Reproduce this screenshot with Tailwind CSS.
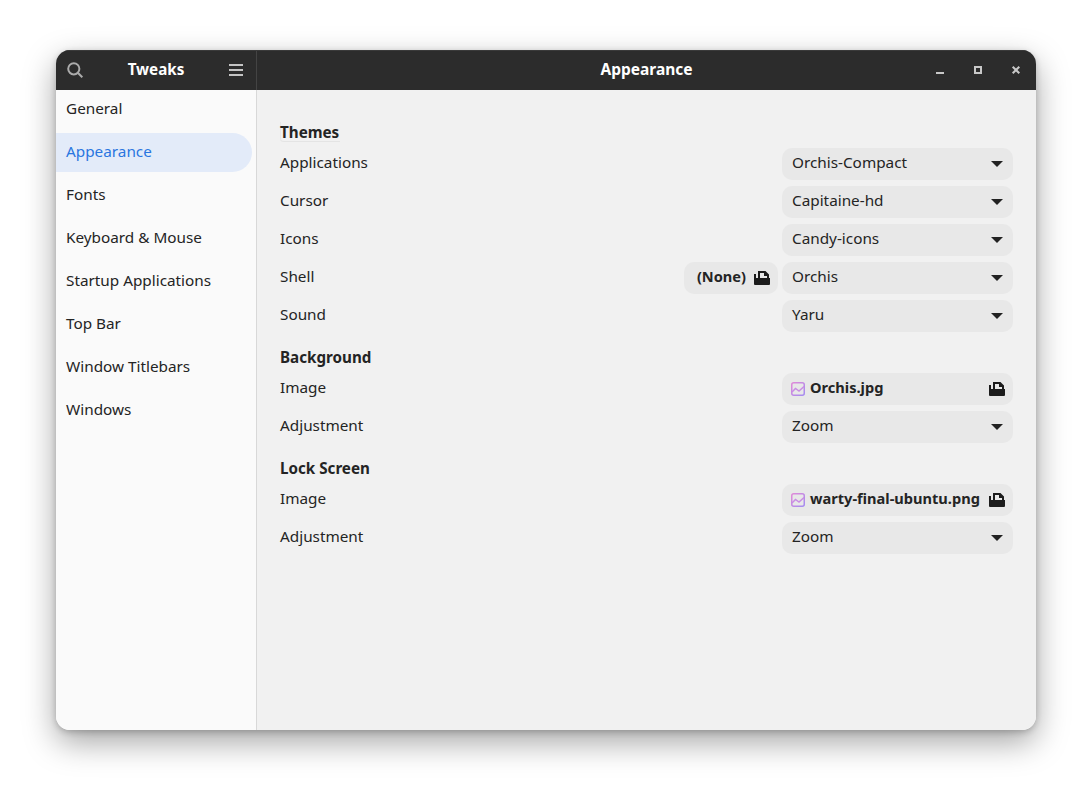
<!DOCTYPE html>
<html lang="en">
<head>
  <meta charset="UTF-8" />
  <title>Tweaks</title>
  <script src="https://cdn.jsdelivr.net/npm/@tailwindcss/browser@4"></script>
</head>
<body class="bg-white w-[1092px] h-[792px] overflow-hidden pt-[50px] pl-[56px] font-['Noto_Sans','Open_Sans',sans-serif] text-[15.3px] text-[#242424]">

  <div class="w-[980px] h-[680px] rounded-[14px] overflow-hidden flex flex-col shadow-[0_12px_32px_rgba(0,0,0,0.36),0_2px_6px_rgba(0,0,0,0.2)]">

    <!-- title bar -->
    <header class="h-[40px] bg-[#2c2c2c] flex text-white font-bold shrink-0 border-t border-[#3a3a3a]">
      <div class="w-[200px] flex items-center justify-between pl-[11px] pr-[13px] pb-[1px]">
        <svg class="w-[16px] h-[16px]" viewBox="0 0 16 16" fill="none" stroke="#ababab" stroke-width="2"><circle cx="6.800" cy="6.800" r="5.600"/><path d="M10.800 10.800L15.300 15.300"/></svg>
        <span class="text-[15.2px] leading-none">Tweaks</span>
        <svg class="w-[14px] h-[14px]" viewBox="0 0 14 14" fill="#c4c4c4"><rect y="1" width="14" height="2"/><rect y="6" width="14" height="2"/><rect y="11" width="14" height="2"/></svg>
      </div>
      <div class="w-px bg-[#444444]"></div>
      <div class="flex-1 flex items-center relative pb-[1px]">
        <span class="w-full text-center text-[15.5px] leading-none">Appearance</span>
        <div class="absolute right-[13px] top-0 h-[39px] pb-[1px] flex items-center gap-[24px]">
          <svg class="w-[14px] h-[14px]" viewBox="0 0 14 14" fill="#c8c8c8"><rect x="3" y="9" width="8" height="2"/></svg>
          <svg class="w-[14px] h-[14px]" viewBox="0 0 14 14" fill="none" stroke="#c8c8c8" stroke-width="2"><rect x="4" y="4" width="6" height="6"/></svg>
          <svg class="w-[14px] h-[14px]" viewBox="0 0 14 14" fill="none" stroke="#c8c8c8" stroke-width="2"><path d="M3.700 3.700L10.300 10.300M10.300 3.700L3.700 10.300"/></svg>
        </div>
      </div>
    </header>

    <div class="flex-1 flex min-h-0">
      <!-- sidebar -->
      <nav class="w-[201px] bg-[#fafafa] border-r border-[#d8d8d8] shrink-0 pr-[4px]">
        <div class="h-[38px] flex items-center pl-[10px] pb-[2px]">General</div>
        <div class="h-[39px] mt-[5px] flex items-center pl-[10px] pb-[2px] bg-[#e3ebf9] text-[#2a76e0] rounded-r-[20px]">Appearance</div>
        <div class="h-[38px] mt-[4px] flex items-center pl-[10px] pb-[2px]">Fonts</div>
        <div class="h-[38px] mt-[5px] flex items-center pl-[10px] pb-[2px]">Keyboard &amp; Mouse</div>
        <div class="h-[38px] mt-[5px] flex items-center pl-[10px] pb-[2px]">Startup Applications</div>
        <div class="h-[38px] mt-[5px] flex items-center pl-[10px] pb-[2px]">Top Bar</div>
        <div class="h-[38px] mt-[5px] flex items-center pl-[10px] pb-[2px]">Window Titlebars</div>
        <div class="h-[38px] mt-[5px] flex items-center pl-[10px] pb-[2px]">Windows</div>
      </nav>

      <!-- content -->
      <main class="flex-1 bg-[#f1f1f1] pt-[32px] pl-[23px] pr-[23px]">
        <h2 class="h-[20px] leading-[20px] font-bold text-[15.2px] mb-[6px]"><span class="inline-block h-[20px] w-[60px] rounded-bl-[4px] shadow-[inset_1px_0_0_#e8e8e8,inset_0_-1px_0_#e4e4e4]">Themes</span></h2>

        <div class="flex flex-col gap-[6px]">
          <div class="flex items-center justify-between h-[32px]">
            <span class="mb-[3px]">Applications</span>
            <div class="w-[231px] h-[32px] rounded-[10px] bg-[#e8e8e8] flex items-center justify-between pl-[10px] pr-[10px]"><span class="mb-[3px]">Orchis-Compact</span><svg class="w-[12px] h-[6px]" viewBox="0 0 12 6" fill="#222222"><path d="M0 0H12L6 6Z"/></svg></div>
          </div>
          <div class="flex items-center justify-between h-[32px]">
            <span class="mb-[3px]">Cursor</span>
            <div class="w-[231px] h-[32px] rounded-[10px] bg-[#e8e8e8] flex items-center justify-between pl-[10px] pr-[10px]"><span class="mb-[3px]">Capitaine-hd</span><svg class="w-[12px] h-[6px]" viewBox="0 0 12 6" fill="#222222"><path d="M0 0H12L6 6Z"/></svg></div>
          </div>
          <div class="flex items-center justify-between h-[32px]">
            <span class="mb-[3px]">Icons</span>
            <div class="w-[231px] h-[32px] rounded-[10px] bg-[#e8e8e8] flex items-center justify-between pl-[10px] pr-[10px]"><span class="mb-[3px]">Candy-icons</span><svg class="w-[12px] h-[6px]" viewBox="0 0 12 6" fill="#222222"><path d="M0 0H12L6 6Z"/></svg></div>
          </div>
          <div class="flex items-center h-[32px]">
            <span class="flex-1 mb-[3px]">Shell</span>
            <div class="w-[94px] h-[32px] rounded-[10px] bg-[#e8e8e8] flex items-center justify-end gap-[8px] pr-[8px] font-bold text-[14.6px] mr-[4px]"><span class="mb-[2px]">(None)</span>
              <svg class="w-[16px] h-[14px] shrink-0" viewBox="0 0 16 14" fill="#1c1c1c" fill-rule="evenodd"><path d="M4 0H11.500L15 3.500V7H4ZM6 2V7H13V5H10V2ZM0 3H2V7H16V13A1 1 0 0 1 15 14H1A1 1 0 0 1 0 13Z"/></svg></div>
            <div class="w-[231px] h-[32px] rounded-[10px] bg-[#e8e8e8] flex items-center justify-between pl-[10px] pr-[10px]"><span class="mb-[3px]">Orchis</span><svg class="w-[12px] h-[6px]" viewBox="0 0 12 6" fill="#222222"><path d="M0 0H12L6 6Z"/></svg></div>
          </div>
          <div class="flex items-center justify-between h-[32px]">
            <span class="mb-[3px]">Sound</span>
            <div class="w-[231px] h-[32px] rounded-[10px] bg-[#e8e8e8] flex items-center justify-between pl-[10px] pr-[10px]"><span class="mb-[3px]">Yaru</span><svg class="w-[12px] h-[6px]" viewBox="0 0 12 6" fill="#222222"><path d="M0 0H12L6 6Z"/></svg></div>
          </div>
        </div>

        <h2 class="h-[20px] leading-[20px] font-bold text-[15.2px] mt-[15px] mb-[6px]">Background</h2>

        <div class="flex flex-col gap-[6px]">
          <div class="flex items-center justify-between h-[32px]">
            <span class="mb-[3px]">Image</span>
            <div class="w-[231px] h-[32px] rounded-[10px] bg-[#e8e8e8] flex items-center pl-[9px] pr-[8px] font-bold text-[14.6px]">
              <svg class="w-[14px] h-[14px] shrink-0 mr-[5px]" viewBox="0 0 14 14" fill="none" stroke-width="1.500"><defs><linearGradient id="pic-a" x1="0" y1="0" x2="1" y2="1"><stop offset="0" stop-color="#e08ad8"/><stop offset="1" stop-color="#a48cf0"/></linearGradient></defs><rect x="0.750" y="0.750" width="12.500" height="12.500" rx="2" stroke="url(#pic-a)"/><path d="M1 10L4.500 6.500L8 9L13 4.500" stroke="#c98ce4"/></svg>
              <span class="flex-1 mb-[2px]">Orchis.jpg</span>
              <svg class="w-[16px] h-[14px] shrink-0" viewBox="0 0 16 14" fill="#1c1c1c" fill-rule="evenodd"><path d="M4 0H11.500L15 3.500V7H4ZM6 2V7H13V5H10V2ZM0 3H2V7H16V13A1 1 0 0 1 15 14H1A1 1 0 0 1 0 13Z"/></svg>
            </div>
          </div>
          <div class="flex items-center justify-between h-[32px]">
            <span class="mb-[3px]">Adjustment</span>
            <div class="w-[231px] h-[32px] rounded-[10px] bg-[#e8e8e8] flex items-center justify-between pl-[10px] pr-[10px]"><span class="mb-[3px]">Zoom</span><svg class="w-[12px] h-[6px]" viewBox="0 0 12 6" fill="#222222"><path d="M0 0H12L6 6Z"/></svg></div>
          </div>
        </div>

        <h2 class="h-[20px] leading-[20px] font-bold text-[15.2px] mt-[15px] mb-[6px]">Lock Screen</h2>

        <div class="flex flex-col gap-[6px]">
          <div class="flex items-center justify-between h-[32px]">
            <span class="mb-[3px]">Image</span>
            <div class="w-[231px] h-[32px] rounded-[10px] bg-[#e8e8e8] flex items-center pl-[9px] pr-[8px] font-bold text-[14.6px]">
              <svg class="w-[14px] h-[14px] shrink-0 mr-[5px]" viewBox="0 0 14 14" fill="none" stroke-width="1.500"><defs><linearGradient id="pic-b" x1="0" y1="0" x2="1" y2="1"><stop offset="0" stop-color="#e08ad8"/><stop offset="1" stop-color="#a48cf0"/></linearGradient></defs><rect x="0.750" y="0.750" width="12.500" height="12.500" rx="2" stroke="url(#pic-b)"/><path d="M1 10L4.500 6.500L8 9L13 4.500" stroke="#c98ce4"/></svg>
              <span class="flex-1 whitespace-nowrap mb-[2px]">warty-final-ubuntu.png</span>
              <svg class="w-[16px] h-[14px] shrink-0" viewBox="0 0 16 14" fill="#1c1c1c" fill-rule="evenodd"><path d="M4 0H11.500L15 3.500V7H4ZM6 2V7H13V5H10V2ZM0 3H2V7H16V13A1 1 0 0 1 15 14H1A1 1 0 0 1 0 13Z"/></svg>
            </div>
          </div>
          <div class="flex items-center justify-between h-[32px]">
            <span class="mb-[3px]">Adjustment</span>
            <div class="w-[231px] h-[32px] rounded-[10px] bg-[#e8e8e8] flex items-center justify-between pl-[10px] pr-[10px]"><span class="mb-[3px]">Zoom</span><svg class="w-[12px] h-[6px]" viewBox="0 0 12 6" fill="#222222"><path d="M0 0H12L6 6Z"/></svg></div>
          </div>
        </div>
      </main>
    </div>
  </div>

</body>
</html>
